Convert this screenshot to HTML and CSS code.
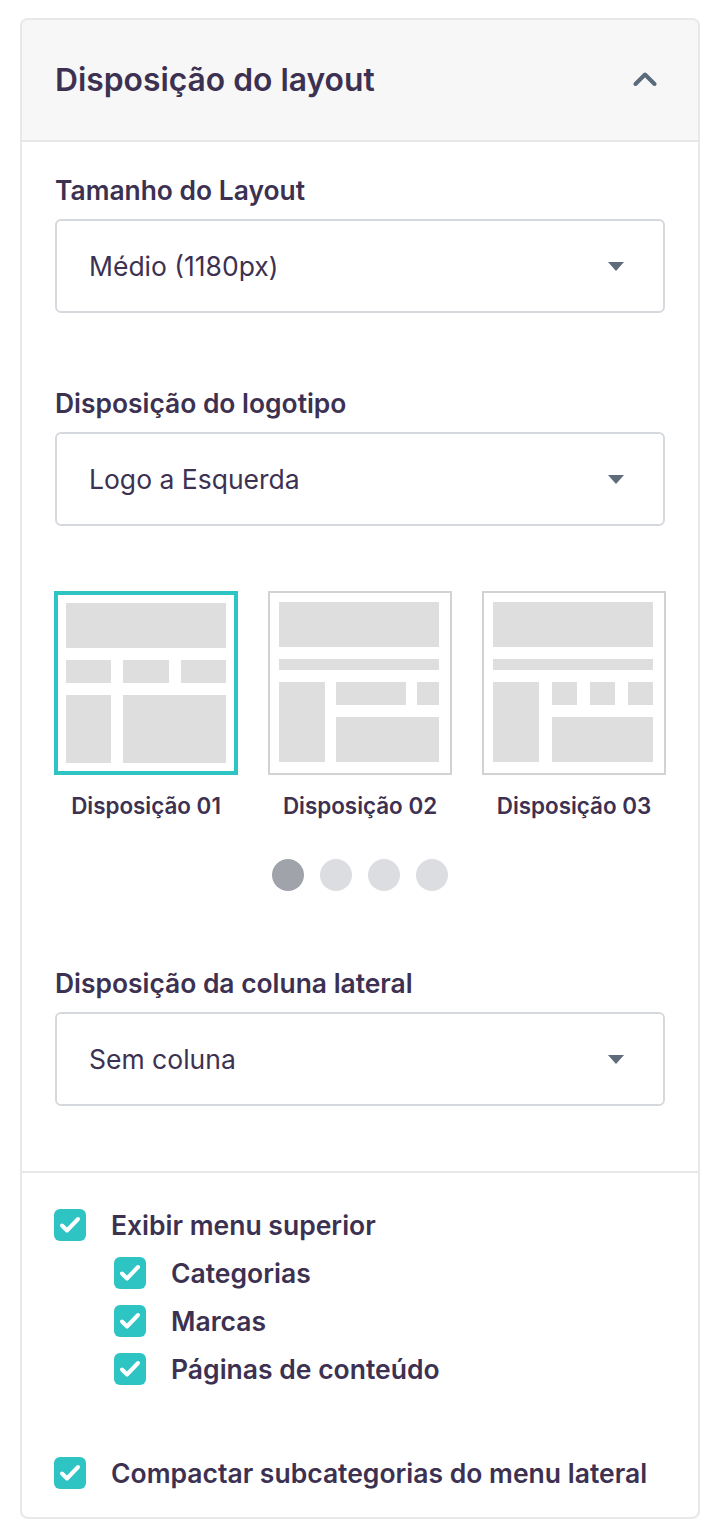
FILE: index.html
```html
<!DOCTYPE html>
<html lang="pt-BR">
<head>
<meta charset="utf-8">
<title>Disposição do layout</title>
<link rel="stylesheet" href="styles.css">
</head>
<body>
<div class="card">
  <div class="card-header">
    <h2 class="card-title">Disposição do layout</h2>
    <svg class="chevron" width="24" height="14" viewBox="0 0 24 14"><path d="M2.5 12 L12 2.5 L21.5 12" fill="none" stroke="#5b6b7b" stroke-width="4" stroke-linecap="round" stroke-linejoin="round"/></svg>
  </div>
  <div class="card-body">
    <div class="field">
      <div class="field-label">Tamanho do Layout</div>
      <div class="select"><span class="select-value">Médio (1180px)</span><span class="caret"></span></div>
    </div>
    <div class="field field-2">
      <div class="field-label">Disposição do logotipo</div>
      <div class="select"><span class="select-value">Logo a Esquerda</span><span class="caret"></span></div>
    </div>

    <div class="thumbs">
      <div class="thumb-item">
        <div class="thumb thumb-active">
          <div class="grid grid-1">
            <div class="blk a"></div><div class="blk b"></div><div class="blk c"></div><div class="blk d"></div><div class="blk e"></div><div class="blk f"></div>
          </div>
        </div>
        <div class="thumb-label">Disposição 01</div>
      </div>
      <div class="thumb-item">
        <div class="thumb">
          <div class="grid grid-2">
            <div class="blk a"></div><div class="blk s"></div><div class="blk l"></div><div class="blk m"></div><div class="blk n"></div><div class="blk o"></div>
          </div>
        </div>
        <div class="thumb-label">Disposição 02</div>
      </div>
      <div class="thumb-item">
        <div class="thumb">
          <div class="grid grid-3">
            <div class="blk a"></div><div class="blk s"></div><div class="blk l"></div><div class="blk m"></div><div class="blk n"></div><div class="blk p"></div><div class="blk o"></div>
          </div>
        </div>
        <div class="thumb-label">Disposição 03</div>
      </div>
    </div>

    <div class="dots">
      <span class="dot dot-active"></span><span class="dot"></span><span class="dot"></span><span class="dot"></span>
    </div>

    <div class="field field-3">
      <div class="field-label">Disposição da coluna lateral</div>
      <div class="select"><span class="select-value">Sem coluna</span><span class="caret"></span></div>
    </div>
  </div>

  <div class="card-options">
    <label class="check-row">
      <span class="checkbox"><svg width="32" height="32" viewBox="0 0 32 32"><path d="M8 16.5 L13 21.5 L24 10" fill="none" stroke="#fff" stroke-width="4" stroke-linecap="round" stroke-linejoin="round"/></svg></span>
      <span class="check-text">Exibir menu superior</span>
    </label>
    <div class="sub-list">
      <label class="check-row">
        <span class="checkbox"><svg width="32" height="32" viewBox="0 0 32 32"><path d="M8 16.5 L13 21.5 L24 10" fill="none" stroke="#fff" stroke-width="4" stroke-linecap="round" stroke-linejoin="round"/></svg></span>
        <span class="check-text">Categorias</span>
      </label>
      <label class="check-row">
        <span class="checkbox"><svg width="32" height="32" viewBox="0 0 32 32"><path d="M8 16.5 L13 21.5 L24 10" fill="none" stroke="#fff" stroke-width="4" stroke-linecap="round" stroke-linejoin="round"/></svg></span>
        <span class="check-text">Marcas</span>
      </label>
      <label class="check-row">
        <span class="checkbox"><svg width="32" height="32" viewBox="0 0 32 32"><path d="M8 16.5 L13 21.5 L24 10" fill="none" stroke="#fff" stroke-width="4" stroke-linecap="round" stroke-linejoin="round"/></svg></span>
        <span class="check-text">Páginas de conteúdo</span>
      </label>
    </div>
    <label class="check-row check-last">
      <span class="checkbox"><svg width="32" height="32" viewBox="0 0 32 32"><path d="M8 16.5 L13 21.5 L24 10" fill="none" stroke="#fff" stroke-width="4" stroke-linecap="round" stroke-linejoin="round"/></svg></span>
      <span class="check-text">Compactar subcategorias do menu lateral</span>
    </label>
  </div>
</div>
</body>
</html>
```
FILE: styles.css
```css
* { box-sizing: border-box; }
html, body { margin: 0; padding: 0; background: #ffffff; }
body {
  font-family: Inter, "Noto Sans", "Liberation Sans", sans-serif;
  color: #3d3152;
}

.card {
  margin: 18px 0 0 20px;
  width: 680px;
  border: 2px solid #e8e8e8;
  border-radius: 8px;
  overflow: hidden;
  background: #fff;
}

.card-header {
  height: 122px;
  background: #f7f7f7;
  border-bottom: 2px solid #e8e8e8;
  display: flex;
  align-items: center;
  justify-content: space-between;
  padding: 0 41px 0 33px;
}
.card-title {
  margin: 0;
  font-size: 31.8px;
  font-weight: 600;
  line-height: 34px;
  color: #3d3152;
}
.chevron { display: block; margin-top: -3px; }

.card-body {
  padding: 34px 33px 65px 33px;
}

.field-label {
  font-size: 26.4px;
  font-weight: 600;
  line-height: 28px;
  margin-bottom: 15px;
}
.field-2 { margin-top: 76px; }
.field-3 { margin-top: 78px; }

.select {
  height: 94px;
  border: 2px solid #d5d9de;
  border-radius: 6px;
  display: flex;
  align-items: center;
  justify-content: space-between;
  padding: 0 39px 0 32px;
}
.select-value {
  font-size: 26.5px;
  font-weight: 400;
  line-height: 30px;
}
.caret {
  width: 0;
  height: 0;
  border-left: 8px solid transparent;
  border-right: 8px solid transparent;
  border-top: 9px solid #5e6b7b;
}

.thumbs {
  margin: 65px -1px 0 -1px;
  display: flex;
  gap: 30px;
}
.thumb-item {
  width: 184px;
  display: flex;
  flex-direction: column;
  align-items: center;
}
.thumb {
  width: 184px;
  height: 184px;
  border: 2px solid #d2d2d2;
  padding: 9px;
  background: #fff;
}
.thumb-active {
  border: 4px solid #2ec4c3;
  padding: 8px;
}
.thumb-label {
  margin-top: 19px;
  font-size: 22.4px;
  font-weight: 600;
  line-height: 24px;
  white-space: nowrap;
}

.grid {
  width: 160px;
  height: 160px;
  display: grid;
}
.blk { background: #dedede; }

.grid-1 {
  grid-template-columns: 45px 46px 45px;
  grid-template-rows: 45px 23px 68px;
  gap: 12px;
  grid-template-areas:
    "a a a"
    "b c d"
    "e f f";
}
.grid-1 .a { grid-area: a; }
.grid-1 .b { grid-area: b; }
.grid-1 .c { grid-area: c; }
.grid-1 .d { grid-area: d; }
.grid-1 .e { grid-area: e; }
.grid-1 .f { grid-area: f; }

.grid-2 {
  grid-template-columns: 46px 70px 22px;
  grid-template-rows: 45px 11px 23px 45px;
  gap: 12px 11px;
  grid-template-areas:
    "a a a"
    "s s s"
    "l m n"
    "l o o";
}
.grid-2 .a { grid-area: a; }
.grid-2 .s { grid-area: s; }
.grid-2 .l { grid-area: l; }
.grid-2 .m { grid-area: m; }
.grid-2 .n { grid-area: n; }
.grid-2 .o { grid-area: o; }

.grid-3 {
  grid-template-columns: 46px 25px 25px 25px;
  grid-template-rows: 45px 11px 23px 45px;
  gap: 12px 13px;
  grid-template-areas:
    "a a a a"
    "s s s s"
    "l m n p"
    "l o o o";
}
.grid-3 .a { grid-area: a; }
.grid-3 .s { grid-area: s; }
.grid-3 .l { grid-area: l; }
.grid-3 .m { grid-area: m; }
.grid-3 .n { grid-area: n; }
.grid-3 .p { grid-area: p; }
.grid-3 .o { grid-area: o; }

.dots {
  margin-top: 41px;
  display: flex;
  justify-content: center;
  gap: 16px;
}
.dot {
  width: 32px;
  height: 32px;
  border-radius: 50%;
  background: #dcdde1;
}
.dot-active { background: #a0a4aa; }

.card-options {
  border-top: 2px solid #e8e8e8;
  padding: 36px 32px 28px 32px;
  display: flex;
  flex-direction: column;
}
.check-row {
  display: flex;
  align-items: center;
  gap: 25px;
  height: 32px;
}
.checkbox {
  width: 32px;
  height: 32px;
  border-radius: 6px;
  background: #2ec4c3;
  flex: none;
}
.checkbox svg { display: block; }
.check-text {
  font-size: 26.5px;
  font-weight: 600;
  line-height: 30px;
  white-space: nowrap;
}
.sub-list {
  margin-top: 16px;
  padding-left: 60px;
  display: flex;
  flex-direction: column;
  gap: 16px;
}
.check-last { margin-top: 72px; }
```
